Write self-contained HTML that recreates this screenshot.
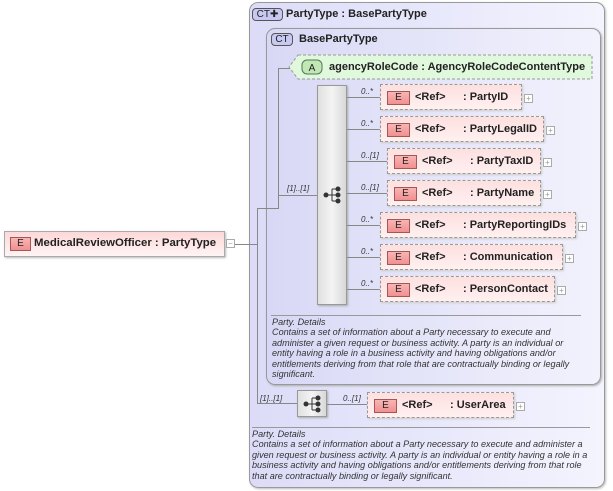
<!DOCTYPE html>
<html><head><meta charset="utf-8"><style>
*{margin:0;padding:0;box-sizing:border-box}
body{width:613px;height:491px;background:#fff;position:relative;overflow:hidden;font-family:"Liberation Sans",sans-serif;}
.a{position:absolute}
.box{position:absolute;border:1px solid #999;border-radius:9px;}
.outer{left:249px;top:2px;width:356px;height:486px;background:linear-gradient(90deg,#dcdcf8,#eaeafc 60%,#f4f4fe);box-shadow:1px 1px 2px #bbb}
.inner{left:266px;top:28px;width:335px;height:357px;background:linear-gradient(90deg,#d8d8f6,#e8e8fa 60%,#f2f2fd);box-shadow:1px 1px 2px #aaa}
.ct{position:absolute;height:13px;border:1px solid #555;border-radius:4px;background:#c8c8f0;font-size:10px;line-height:11px;text-align:center;color:#222}
.t{position:absolute;font-size:11px;font-weight:bold;color:#222;white-space:nowrap}
.el{position:absolute;height:26px;border:1px dashed #999;background:linear-gradient(#fde0e0,#fff0f0);box-shadow:1px 1px 2px #ccc}
.E{position:absolute;left:6px;top:6px;width:23px;height:14px;border:1px solid #a55;background:linear-gradient(#f8b4b4,#f09090);font-size:10px;line-height:12px;text-align:center;color:#222}
.el .r{position:absolute;left:34px;top:6px;font-size:11px;font-weight:bold;color:#222}
.el .n{position:absolute;top:6px;font-size:11px;font-weight:bold;color:#222;white-space:nowrap}
.pl{position:absolute;width:9px;height:9px;border:1px solid #aaa;background:#fff;font-size:8px;line-height:7px;text-align:center;color:#999}
.m{position:absolute;font-size:8px;font-style:italic;color:#333}
.h{position:absolute;height:1px;background:#888}
.v{position:absolute;width:1px;background:#888}
.doc{position:absolute;font-size:9.1px;font-style:italic;color:#333;line-height:10.4px;white-space:nowrap}
.comp{position:absolute;border:1px solid #999;background:linear-gradient(90deg,#e0e0e0,#f4f4f4 50%,#d8d8d8);box-shadow:1px 1px 2px #aaa}
</style></head><body>
<div class="box outer"></div>
<div class="ct" style="left:252px;top:8px;width:31px;">CT✚</div>
<div class="t" style="left:286px;top:8px">PartyType : BasePartyType</div>
<div class="box inner"></div>
<div class="ct" style="left:271px;top:33px;width:22px;">CT</div>
<div class="t" style="left:299px;top:33px">BasePartyType</div>

<svg class="a" style="left:288px;top:54px" width="308" height="28"><path d="M10 1 H304 V25 H10 L1 13 Z" fill="#e0f8dc" stroke="#999" stroke-dasharray="3,2"/><rect x="14" y="6" width="20" height="14" rx="5" fill="#bfe8b4" stroke="#575"/><text x="24" y="17" font-size="10" text-anchor="middle" font-family="Liberation Sans" fill="#222">A</text></svg>
<div class="t" style="left:329px;top:61px">agencyRoleCode : AgencyRoleCodeContentType</div>

<div class="h" style="left:233px;top:244px;width:25px"></div>
<div class="v" style="left:257px;top:208px;height:196px"></div>
<div class="h" style="left:257px;top:208px;width:22px"></div>
<div class="v" style="left:278px;top:68px;height:141px"></div>
<div class="h" style="left:278px;top:68px;width:12px"></div>
<div class="h" style="left:278px;top:195px;width:40px"></div>
<div class="h" style="left:257px;top:403px;width:40px"></div>
<div class="m" style="left:287px;top:184px">[1]..[1]</div>
<div class="m" style="left:260px;top:394px">[1]..[1]</div>

<div class="comp" style="left:317px;top:85px;width:30px;height:220px"></div>
<svg class="a" style="left:322px;top:184px" width="22" height="22"><circle cx="4" cy="11" r="2.5" fill="#333"/><path d="M4 11H10M10 5V17M10 5H16M10 11H16M10 17H16" stroke="#333" fill="none"/><circle cx="16" cy="5" r="2.5" fill="#333"/><circle cx="16" cy="11" r="2.5" fill="#333"/><circle cx="16" cy="17" r="2.5" fill="#333"/></svg>

<div class="comp" style="left:297px;top:390px;width:30px;height:27px"></div>
<svg class="a" style="left:302px;top:393px" width="22" height="22"><circle cx="4" cy="11" r="2.5" fill="#333"/><path d="M4 11H10M10 5V17M10 5H16M10 11H16M10 17H16" stroke="#333" fill="none"/><circle cx="16" cy="5" r="2.5" fill="#333"/><circle cx="16" cy="11" r="2.5" fill="#333"/><circle cx="16" cy="17" r="2.5" fill="#333"/></svg>
<div class="h" style="left:327px;top:404px;width:40px"></div>
<div class="m" style="left:343px;top:394px">0..[1]</div>

<div class="h" style="left:347px;top:97px;width:33px"></div><div class="m" style="left:361px;top:87px">0..*</div>
<div class="el" style="left:380px;top:84px;width:142px"><div class="E">E</div><span class="r">&lt;Ref&gt;</span><span class="n" style="left:82px">: PartyID</span></div><div class="pl" style="left:524px;top:94px">+</div>

<div class="h" style="left:347px;top:129px;width:33px"></div><div class="m" style="left:361px;top:119px">0..*</div>
<div class="el" style="left:380px;top:116px;width:164px"><div class="E">E</div><span class="r">&lt;Ref&gt;</span><span class="n" style="left:82px">: PartyLegalID</span></div><div class="pl" style="left:546px;top:126px">+</div>

<div class="h" style="left:347px;top:161px;width:40px"></div><div class="m" style="left:361px;top:151px">0..[1]</div>
<div class="el" style="left:387px;top:148px;width:154px"><div class="E">E</div><span class="r">&lt;Ref&gt;</span><span class="n" style="left:82px">: PartyTaxID</span></div><div class="pl" style="left:543px;top:158px">+</div>

<div class="h" style="left:347px;top:193px;width:40px"></div><div class="m" style="left:361px;top:183px">0..[1]</div>
<div class="el" style="left:387px;top:180px;width:154px"><div class="E">E</div><span class="r">&lt;Ref&gt;</span><span class="n" style="left:82px">: PartyName</span></div><div class="pl" style="left:543px;top:190px">+</div>

<div class="h" style="left:347px;top:225px;width:33px"></div><div class="m" style="left:361px;top:215px">0..*</div>
<div class="el" style="left:380px;top:212px;width:196px"><div class="E">E</div><span class="r">&lt;Ref&gt;</span><span class="n" style="left:82px">: PartyReportingIDs</span></div><div class="pl" style="left:578px;top:222px">+</div>

<div class="h" style="left:347px;top:257px;width:33px"></div><div class="m" style="left:361px;top:247px">0..*</div>
<div class="el" style="left:380px;top:244px;width:183px"><div class="E">E</div><span class="r">&lt;Ref&gt;</span><span class="n" style="left:82px">: Communication</span></div><div class="pl" style="left:565px;top:254px">+</div>

<div class="h" style="left:347px;top:289px;width:33px"></div><div class="m" style="left:361px;top:279px">0..*</div>
<div class="el" style="left:380px;top:276px;width:175px"><div class="E">E</div><span class="r">&lt;Ref&gt;</span><span class="n" style="left:82px">: PersonContact</span></div><div class="pl" style="left:557px;top:286px">+</div>

<div class="el" style="left:367px;top:392px;width:147px"><div class="E">E</div><span class="r">&lt;Ref&gt;</span><span class="n" style="left:82px">: UserArea</span></div><div class="pl" style="left:516px;top:402px">+</div>

<div class="h" style="left:271px;top:315px;width:310px;background:#999"></div>
<div class="doc" style="left:272px;top:317px">Party. Details<br>Contains a set of information about a Party necessary to execute and<br>administer a given request or business activity. A party is an individual or<br>entity having a role in a business activity and having obligations and/or<br>entitlements deriving from that role that are contractually binding or legally<br>significant.</div>
<div class="h" style="left:252px;top:427px;width:338px;background:#999"></div>
<div class="doc" style="left:252px;top:429px">Party. Details<br>Contains a set of information about a Party necessary to execute and administer a<br>given request or business activity. A party is an individual or entity having a role in a<br>business activity and having obligations and/or entitlements deriving from that role<br>that are contractually binding or legally significant.</div>

<div class="a" style="left:4px;top:231px;width:221px;height:26px;border:1px solid #aaa;background:linear-gradient(#fdd8d8,#fff4f4);box-shadow:1px 1px 2px #bbb"><div class="E" style="left:5px;top:5px;width:21px">E</div><span class="t" style="left:29px;top:5px;font-size:11.4px">MedicalReviewOfficer : PartyType</span></div>
<div class="pl" style="left:226px;top:239px">−</div>
</body></html>
